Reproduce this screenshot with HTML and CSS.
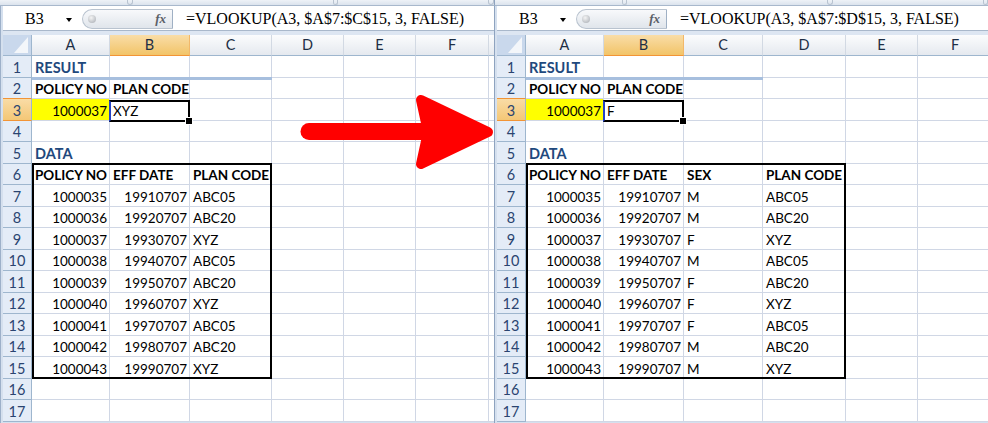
FILE: index.html
```html
<!DOCTYPE html>
<html>
<head>
<meta charset="utf-8">
<link rel="stylesheet" href="styles.css">
</head>
<body>
<div class="wrap">
  <div class="panel p1">
    <div class="topstrip"><span class="tick" style="margin-left:127px"></span><span class="tick" style="margin-left:200px"></span><span class="tick" style="margin-left:150px"></span></div>
    <div class="inner">
      <div class="fbar">
        <div class="namebox"><span>B3</span><span class="dd"></span></div>
        <div class="pill"><span class="dot"></span><i class="fx">fx</i></div>
        <div class="formula">=VLOOKUP(A3, $A$7:$C$15, 3, FALSE)</div>
      </div>
      <div class="gap"></div>
      <div class="sheet">
        <div class="row hrow"><div class="c rh corner"><svg width="28" height="20"><polygon points="25,2 25,18 11,18" fill="#f3f6fa"/></svg></div><div class="c ca">A</div><div class="c cb on">B</div><div class="c cc">C</div><div class="c cd">D</div><div class="c ce">E</div><div class="c cf">F</div><div class="c cg"></div></div>
        <div class="row"><div class="c rh">1</div><div class="c ca title hl">RESULT</div><div class="c cb hl"></div><div class="c cc hl"></div><div class="c cd"></div><div class="c ce"></div><div class="c cf"></div><div class="c cg"></div></div>
        <div class="row"><div class="c rh pre">2</div><div class="c ca b">POLICY NO</div><div class="c cb b">PLAN CODE</div><div class="c cc"></div><div class="c cd"></div><div class="c ce"></div><div class="c cf"></div><div class="c cg"></div></div>
        <div class="row"><div class="c rh on">3</div><div class="c ca n y">1000037</div><div class="c cb sel">XYZ</div><div class="c cc"></div><div class="c cd"></div><div class="c ce"></div><div class="c cf"></div><div class="c cg"></div></div>
        <div class="row"><div class="c rh">4</div><div class="c ca"></div><div class="c cb"></div><div class="c cc"></div><div class="c cd"></div><div class="c ce"></div><div class="c cf"></div><div class="c cg"></div></div>
        <div class="row"><div class="c rh">5</div><div class="c ca title">DATA</div><div class="c cb"></div><div class="c cc"></div><div class="c cd"></div><div class="c ce"></div><div class="c cf"></div><div class="c cg"></div></div>
        <div class="row"><div class="c rh">6</div><div class="c ca b e t l">POLICY NO</div><div class="c cb b e t">EFF DATE</div><div class="c cc b e t r">PLAN CODE</div><div class="c cd"></div><div class="c ce"></div><div class="c cf"></div><div class="c cg"></div></div>
        <div class="row"><div class="c rh">7</div><div class="c ca n e l">1000035</div><div class="c cb n">19910707</div><div class="c cc e r">ABC05</div><div class="c cd"></div><div class="c ce"></div><div class="c cf"></div><div class="c cg"></div></div>
        <div class="row"><div class="c rh">8</div><div class="c ca n e l">1000036</div><div class="c cb n">19920707</div><div class="c cc e r">ABC20</div><div class="c cd"></div><div class="c ce"></div><div class="c cf"></div><div class="c cg"></div></div>
        <div class="row"><div class="c rh">9</div><div class="c ca n e l">1000037</div><div class="c cb n">19930707</div><div class="c cc e r">XYZ</div><div class="c cd"></div><div class="c ce"></div><div class="c cf"></div><div class="c cg"></div></div>
        <div class="row"><div class="c rh">10</div><div class="c ca n e l">1000038</div><div class="c cb n">19940707</div><div class="c cc e r">ABC05</div><div class="c cd"></div><div class="c ce"></div><div class="c cf"></div><div class="c cg"></div></div>
        <div class="row"><div class="c rh">11</div><div class="c ca n e l">1000039</div><div class="c cb n">19950707</div><div class="c cc e r">ABC20</div><div class="c cd"></div><div class="c ce"></div><div class="c cf"></div><div class="c cg"></div></div>
        <div class="row"><div class="c rh">12</div><div class="c ca n e l">1000040</div><div class="c cb n">19960707</div><div class="c cc e r">XYZ</div><div class="c cd"></div><div class="c ce"></div><div class="c cf"></div><div class="c cg"></div></div>
        <div class="row"><div class="c rh">13</div><div class="c ca n e l">1000041</div><div class="c cb n">19970707</div><div class="c cc e r">ABC05</div><div class="c cd"></div><div class="c ce"></div><div class="c cf"></div><div class="c cg"></div></div>
        <div class="row"><div class="c rh">14</div><div class="c ca n e l">1000042</div><div class="c cb n">19980707</div><div class="c cc e r">ABC20</div><div class="c cd"></div><div class="c ce"></div><div class="c cf"></div><div class="c cg"></div></div>
        <div class="row"><div class="c rh">15</div><div class="c ca n e l eb">1000043</div><div class="c cb n e eb">19990707</div><div class="c cc e r eb">XYZ</div><div class="c cd"></div><div class="c ce"></div><div class="c cf"></div><div class="c cg"></div></div>
        <div class="row"><div class="c rh">16</div><div class="c ca"></div><div class="c cb"></div><div class="c cc"></div><div class="c cd"></div><div class="c ce"></div><div class="c cf"></div><div class="c cg"></div></div>
        <div class="row"><div class="c rh">17</div><div class="c ca"></div><div class="c cb"></div><div class="c cc"></div><div class="c cd"></div><div class="c ce"></div><div class="c cf"></div><div class="c cg"></div></div>
      </div>
    </div>
  </div>

  <div class="panel p2">
    <div class="topstrip"><span class="tick" style="margin-left:127px"></span><span class="tick" style="margin-left:200px"></span><span class="tick" style="margin-left:150px"></span></div>
    <div class="inner">
      <div class="fbar">
        <div class="namebox"><span>B3</span><span class="dd"></span></div>
        <div class="pill"><span class="dot"></span><i class="fx">fx</i></div>
        <div class="formula">=VLOOKUP(A3, $A$7:$D$15, 3, FALSE)</div>
      </div>
      <div class="gap"></div>
      <div class="sheet">
        <div class="row hrow"><div class="c rh corner"><svg width="28" height="20"><polygon points="25,2 25,18 11,18" fill="#f3f6fa"/></svg></div><div class="c ca">A</div><div class="c cb on">B</div><div class="c cc">C</div><div class="c cd">D</div><div class="c ce">E</div><div class="c cf">F</div></div>
        <div class="row"><div class="c rh">1</div><div class="c ca title hl">RESULT</div><div class="c cb hl"></div><div class="c cc hl"></div><div class="c cd"></div><div class="c ce"></div><div class="c cf"></div></div>
        <div class="row"><div class="c rh pre">2</div><div class="c ca b">POLICY NO</div><div class="c cb b">PLAN CODE</div><div class="c cc"></div><div class="c cd"></div><div class="c ce"></div><div class="c cf"></div></div>
        <div class="row"><div class="c rh on">3</div><div class="c ca n y">1000037</div><div class="c cb sel">F</div><div class="c cc"></div><div class="c cd"></div><div class="c ce"></div><div class="c cf"></div></div>
        <div class="row"><div class="c rh">4</div><div class="c ca"></div><div class="c cb"></div><div class="c cc"></div><div class="c cd"></div><div class="c ce"></div><div class="c cf"></div></div>
        <div class="row"><div class="c rh">5</div><div class="c ca title">DATA</div><div class="c cb"></div><div class="c cc"></div><div class="c cd"></div><div class="c ce"></div><div class="c cf"></div></div>
        <div class="row"><div class="c rh">6</div><div class="c ca b e t l">POLICY NO</div><div class="c cb b e t">EFF DATE</div><div class="c cc b e t">SEX</div><div class="c cd b e t r">PLAN CODE</div><div class="c ce"></div><div class="c cf"></div></div>
        <div class="row"><div class="c rh">7</div><div class="c ca n e l">1000035</div><div class="c cb n">19910707</div><div class="c cc">M</div><div class="c cd e r">ABC05</div><div class="c ce"></div><div class="c cf"></div></div>
        <div class="row"><div class="c rh">8</div><div class="c ca n e l">1000036</div><div class="c cb n">19920707</div><div class="c cc">M</div><div class="c cd e r">ABC20</div><div class="c ce"></div><div class="c cf"></div></div>
        <div class="row"><div class="c rh">9</div><div class="c ca n e l">1000037</div><div class="c cb n">19930707</div><div class="c cc">F</div><div class="c cd e r">XYZ</div><div class="c ce"></div><div class="c cf"></div></div>
        <div class="row"><div class="c rh">10</div><div class="c ca n e l">1000038</div><div class="c cb n">19940707</div><div class="c cc">M</div><div class="c cd e r">ABC05</div><div class="c ce"></div><div class="c cf"></div></div>
        <div class="row"><div class="c rh">11</div><div class="c ca n e l">1000039</div><div class="c cb n">19950707</div><div class="c cc">F</div><div class="c cd e r">ABC20</div><div class="c ce"></div><div class="c cf"></div></div>
        <div class="row"><div class="c rh">12</div><div class="c ca n e l">1000040</div><div class="c cb n">19960707</div><div class="c cc">F</div><div class="c cd e r">XYZ</div><div class="c ce"></div><div class="c cf"></div></div>
        <div class="row"><div class="c rh">13</div><div class="c ca n e l">1000041</div><div class="c cb n">19970707</div><div class="c cc">F</div><div class="c cd e r">ABC05</div><div class="c ce"></div><div class="c cf"></div></div>
        <div class="row"><div class="c rh">14</div><div class="c ca n e l">1000042</div><div class="c cb n">19980707</div><div class="c cc">M</div><div class="c cd e r">ABC20</div><div class="c ce"></div><div class="c cf"></div></div>
        <div class="row"><div class="c rh">15</div><div class="c ca n e l eb">1000043</div><div class="c cb n e eb">19990707</div><div class="c cc e eb">M</div><div class="c cd e r eb">XYZ</div><div class="c ce"></div><div class="c cf"></div></div>
        <div class="row"><div class="c rh">16</div><div class="c ca"></div><div class="c cb"></div><div class="c cc"></div><div class="c cd"></div><div class="c ce"></div><div class="c cf"></div></div>
        <div class="row"><div class="c rh">17</div><div class="c ca"></div><div class="c cb"></div><div class="c cc"></div><div class="c cd"></div><div class="c ce"></div><div class="c cf"></div></div>
      </div>
    </div>
  </div>
</div>

<svg class="arrow" width="988" height="423" viewBox="0 0 988 423">
  <line x1="309" y1="131.5" x2="432" y2="131.5" stroke="#ff0000" stroke-width="17" stroke-linecap="round"/>
  <polygon points="421,100 488,132 421,164 428,132" fill="#ff0000" stroke="#ff0000" stroke-width="10" stroke-linejoin="round"/>
</svg>
</body>
</html>
```

FILE: styles.css
```css
* { box-sizing: border-box; }
html, body { margin: 0; padding: 0; }
body {
  width: 988px;
  height: 423px;
  overflow: hidden;
  position: relative;
  background: #fff;
  font-family: Lato, "Open Sans", sans-serif;
  color: #000;
}
.wrap { display: flex; height: 423px; }
.panel {
  width: 494px;
  flex: none;
  overflow: hidden;
  display: flex;
  flex-direction: column;
}
.topstrip {
  height: 6px;
  flex: none;
  display: flex;
  background: linear-gradient(#eef2f7, #dbe3ed);
  border-bottom: 1px solid #a8b8cc;
}
.p2 .topstrip { border-left: 1px solid #8ea3bf; }
.tick {
  width: 6px;
  height: 5px;
  border-left: 1px solid #b8c3d0;
  border-right: 1px solid #b8c3d0;
  border-bottom: 1px solid #b8c3d0;
  border-radius: 0 0 3px 3px;
}
.inner {
  flex: 1;
  display: flex;
  flex-direction: column;
  border-left: 1px solid #9db0c9;
  padding-left: 2px;
  background: #d5e0ee;
}
.p2 .inner { border-left-color: #8ea3bf; }
.fbar {
  height: 25px;
  flex: none;
  display: flex;
  background: #fff;
  border-bottom: 1px solid #a9b8cb;
}
.namebox {
  width: 79px;
  flex: none;
  display: flex;
  align-items: center;
  padding-left: 22px;
  font: 16px "Liberation Serif", serif;
  padding-top: 1px;
}
.dd {
  margin-left: auto;
  margin-right: 10px;
  width: 0;
  height: 0;
  border-left: 3.5px solid transparent;
  border-right: 3.5px solid transparent;
  border-top: 4px solid #000;
  margin-top: 3px;
}
.pill {
  width: 91px;
  flex: none;
  margin: 3px 0 1px 0;
  border: 1px solid #b9c3cf;
  border-right-color: #9fb0c4;
  border-radius: 11px 0 0 11px;
  background: linear-gradient(#f8f9fb, #e0e5eb);
  display: flex;
  align-items: center;
  justify-content: space-between;
  padding: 0 6px 0 5px;
}
.dot {
  width: 8px;
  height: 8px;
  border-radius: 50%;
  background: radial-gradient(circle at 40% 35%, #f4f4f4, #a5aab1);
}
.fx {
  font: italic bold 13px "Liberation Serif", serif;
  color: #5b6068;
}
.formula {
  flex: 1;
  padding-left: 13px;
  font: 16px "Liberation Serif", serif;
  white-space: nowrap;
  line-height: 26px;
}
.gap { height: 4px; flex: none; background: #dde6f2; }
.sheet { display: flex; flex-direction: column; background: #fff; }
.row { display: flex; height: 21.5px; flex: none; }
.hrow { height: 21px; }
.c {
  flex: none;
  height: 100%;
  border-right: 1px solid #d0d7e5;
  border-bottom: 1px solid #d0d7e5;
  position: relative;
  display: flex;
  align-items: flex-end;
  padding: 0 2px 1px 3px;
  font-size: 13.5px;
  line-height: 16px;
  white-space: nowrap;
}
.ca { width: 78px; }
.cb { width: 80px; }
.cc { width: 82px; }
.cd { width: 72px; }
.ce { width: 72px; }
.cf { width: 73px; }
.cg { width: 60px; }
.p2 .cc { width: 79px; }
.p2 .cd { width: 83px; }
.p2 .cf { width: 75px; }

.rh {
  width: 29px;
  background: #e4ecf7;
  border-right-color: #9eb6ce;
  border-bottom-color: #9eb6ce;
  justify-content: center;
  color: #2a4470;
  padding: 0 0 1px 0;
  font-size: 14.5px;
}
.rh.pre { border-bottom-color: #f29436; }
.rh.on {
  background: linear-gradient(#f9dca6, #f4c776);
  border-bottom-color: #f29436;
}
.hrow .c {
  background: linear-gradient(#fbfcfd, #e5e9ef);
  border-right-color: #d2d9e3;
  border-bottom-color: #9eb6ce;
  justify-content: center;
  align-items: center;
  padding: 0;
  font-size: 14.5px;
  color: #1e2f45;
}
.hrow .corner {
  background: #c9d8ec;
  border-right-color: #9eb6ce;
  display: block;
}
.corner svg { display: block; }
.hrow .on {
  background: linear-gradient(#f9dda8, #f2c468);
  border-bottom-color: #f29436;
  border-right-color: #f2b86a;
}

.n { justify-content: flex-end; }
.b { font-weight: 700; }
.title { font-weight: 700; color: #1f497d; font-size: 14.5px; }
.y { background: #ffff00; }

.e::before {
  content: "";
  position: absolute;
  top: -1px;
  left: 0;
  right: -1px;
  bottom: -1px;
  border: 0 solid #000;
  z-index: 2;
  pointer-events: none;
}
.t::before { border-top-width: 2px; }
.l::before { border-left-width: 2px; }
.r::before { border-right-width: 2px; }
.eb::before { border-bottom-width: 2px; }

.hl::after {
  content: "";
  position: absolute;
  left: 0;
  right: -1px;
  bottom: -3px;
  height: 3px;
  background: #a7bfde;
  z-index: 1;
}
.sel::before {
  content: "";
  position: absolute;
  top: 1px;
  left: -1px;
  right: -1px;
  bottom: -2px;
  border: 2px solid #000;
  border-left-color: #2543c6;
  z-index: 3;
}
.sel::after {
  content: "";
  position: absolute;
  right: -4px;
  bottom: -5px;
  width: 6px;
  height: 6px;
  background: #000;
  border: 1px solid #fff;
  z-index: 4;
}
.arrow {
  position: absolute;
  left: 0;
  top: 0;
  z-index: 10;
  pointer-events: none;
}
```
